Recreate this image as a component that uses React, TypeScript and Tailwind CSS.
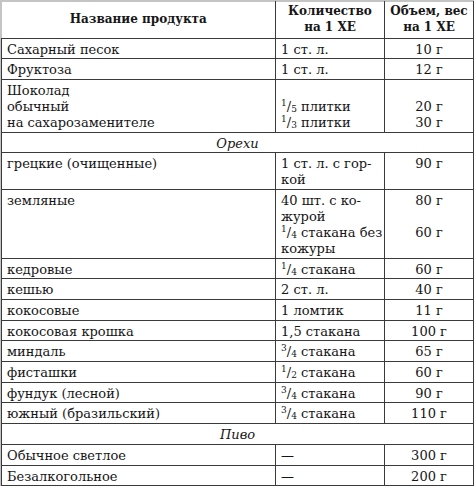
const font = { fontFamily: '"DejaVu Serif", "Liberation Serif", serif' };

function Frac({ n, d }: { n: string; d: string }) {
  return (
    <span className="whitespace-nowrap leading-[0]">
      <span className="text-[9px] relative -top-[5px]">{n}</span>
      <span>/</span>
      <span className="text-[9px] relative top-[1px]">{d}</span>
    </span>
  );
}

type Row = {
  name: React.ReactNode;
  qty: React.ReactNode;
  vol: React.ReactNode;
};

const cell =
  "border border-[#3a3a3a] px-[5px] pt-[3px] pb-[0.7px] align-top leading-[16px] whitespace-nowrap";

function ItemRow({ name, qty, vol }: Row) {
  return (
    <tr>
      <td className={cell}>{name}</td>
      <td className={cell}>{qty}</td>
      <td className={cell + " text-center"}>{vol}</td>
    </tr>
  );
}

function Section({ title }: { title: string }) {
  return (
    <tr>
      <td colSpan={3} className={cell + " text-center italic"}>
        {title}
      </td>
    </tr>
  );
}

export default function App() {
  return (
    <div className="w-[474px] h-[486px] overflow-hidden bg-white">
      <div
        className="w-[474px] h-[486px] border-l-2 border-t-2 border-r border-b border-[#c4c4c4] text-[13px] leading-[16px] text-[#161616]"
        style={font}
      >
        <table className="table-fixed border-collapse w-[472px] -mt-[1px] -ml-[1px] leading-[16px]">
          <colgroup>
            <col className="w-[274px]" />
            <col className="w-[109px]" />
            <col className="w-[89px]" />
          </colgroup>
          <thead>
            <tr className="font-bold text-[12px] leading-[16px]">
              <th className="border border-[#3a3a3a] border-t-0 border-l-0 px-1 py-[2px] h-[37px] align-middle">
                Название продукта
              </th>
              <th className="border border-[#3a3a3a] border-t-0 px-1 py-[2px] align-middle">
                Количество
                <br />
                на 1 ХЕ
              </th>
              <th className="border border-[#3a3a3a] border-t-0 px-1 py-[2px] align-middle">
                Объем, вес
                <br />
                на 1 ХЕ
              </th>
            </tr>
          </thead>
          <tbody>
            <ItemRow name="Сахарный песок" qty="1 ст. л." vol="10 г" />
            <ItemRow name="Фруктоза" qty="1 ст. л." vol="12 г" />
            <ItemRow
              name={
                <>
                  Шоколад
                  <br />
                  обычный
                  <br />
                  на сахарозаменителе
                </>
              }
              qty={
                <>
                  <br />
                  <Frac n="1" d="5" /> плитки
                  <br />
                  <Frac n="1" d="3" /> плитки
                </>
              }
              vol={
                <>
                  <br />
                  20 г
                  <br />
                  30 г
                </>
              }
            />
            <Section title="Орехи" />
            <ItemRow
              name="грецкие (очищенные)"
              qty={
                <>
                  1 ст. л. с гор-
                  <br />
                  кой
                </>
              }
              vol="90 г"
            />
            <ItemRow
              name="земляные"
              qty={
                <>
                  40 шт. с ко-
                  <br />
                  журой
                  <br />
                  <Frac n="1" d="4" /> стакана без
                  <br />
                  кожуры
                </>
              }
              vol={
                <>
                  80 г
                  <br />
                  <br />
                  60 г
                </>
              }
            />
            <ItemRow name="кедровые" qty={<><Frac n="1" d="4" /> стакана</>} vol="60 г" />
            <ItemRow name="кешью" qty="2 ст. л." vol="40 г" />
            <ItemRow name="кокосовые" qty="1 ломтик" vol="11 г" />
            <ItemRow name="кокосовая крошка" qty="1,5 стакана" vol="100 г" />
            <ItemRow name="миндаль" qty={<><Frac n="3" d="4" /> стакана</>} vol="65 г" />
            <ItemRow name="фисташки" qty={<><Frac n="1" d="2" /> стакана</>} vol="60 г" />
            <ItemRow name="фундук (лесной)" qty={<><Frac n="3" d="4" /> стакана</>} vol="90 г" />
            <ItemRow name="южный (бразильский)" qty={<><Frac n="3" d="4" /> стакана</>} vol="110 г" />
            <Section title="Пиво" />
            <ItemRow name="Обычное светлое" qty="—" vol="300 г" />
            <ItemRow name="Безалкогольное" qty="—" vol="200 г" />
          </tbody>
        </table>
      </div>
    </div>
  );
}
